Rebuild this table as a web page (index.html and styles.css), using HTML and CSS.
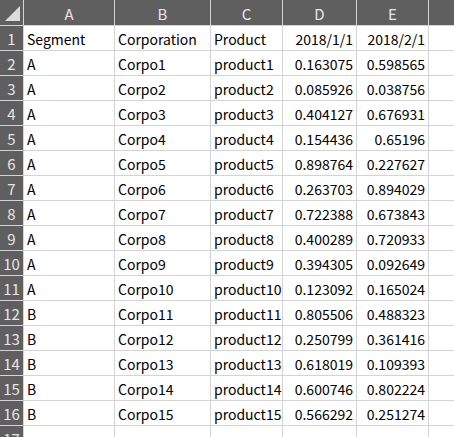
FILE: index.html
```html
<!DOCTYPE html>
<html>
<head>
<meta charset="utf-8">
<link rel="stylesheet" href="styles.css">
</head>
<body>
<div class="sheet">
  <div class="hd corner"><svg width="23" height="25" viewBox="0 0 23 25"><polygon points="5,21 20,21 20,6" fill="#dcdcdc"/></svg></div>
  <div class="hd col">A</div><div class="hd col">B</div><div class="hd col">C</div><div class="hd col">D</div><div class="hd col">E</div><div class="hd col"></div>

  <div class="hd rn">1</div><div class="c">Segment</div><div class="c">Corporation</div><div class="c">Product</div><div class="c n">2018/1/1</div><div class="c n">2018/2/1</div><div class="c"></div>
  <div class="hd rn">2</div><div class="c">A</div><div class="c">Corpo1</div><div class="c">product1</div><div class="c n">0.163075</div><div class="c n">0.598565</div><div class="c"></div>
  <div class="hd rn">3</div><div class="c">A</div><div class="c">Corpo2</div><div class="c">product2</div><div class="c n">0.085926</div><div class="c n">0.038756</div><div class="c"></div>
  <div class="hd rn">4</div><div class="c">A</div><div class="c">Corpo3</div><div class="c">product3</div><div class="c n">0.404127</div><div class="c n">0.676931</div><div class="c"></div>
  <div class="hd rn">5</div><div class="c">A</div><div class="c">Corpo4</div><div class="c">product4</div><div class="c n">0.154436</div><div class="c n">0.65196</div><div class="c"></div>
  <div class="hd rn">6</div><div class="c">A</div><div class="c">Corpo5</div><div class="c">product5</div><div class="c n">0.898764</div><div class="c n">0.227627</div><div class="c"></div>
  <div class="hd rn">7</div><div class="c">A</div><div class="c">Corpo6</div><div class="c">product6</div><div class="c n">0.263703</div><div class="c n">0.894029</div><div class="c"></div>
  <div class="hd rn">8</div><div class="c">A</div><div class="c">Corpo7</div><div class="c">product7</div><div class="c n">0.722388</div><div class="c n">0.673843</div><div class="c"></div>
  <div class="hd rn">9</div><div class="c">A</div><div class="c">Corpo8</div><div class="c">product8</div><div class="c n">0.400289</div><div class="c n">0.720933</div><div class="c"></div>
  <div class="hd rn">10</div><div class="c">A</div><div class="c">Corpo9</div><div class="c">product9</div><div class="c n">0.394305</div><div class="c n">0.092649</div><div class="c"></div>
  <div class="hd rn">11</div><div class="c">A</div><div class="c">Corpo10</div><div class="c">product10</div><div class="c n">0.123092</div><div class="c n">0.165024</div><div class="c"></div>
  <div class="hd rn">12</div><div class="c">B</div><div class="c">Corpo11</div><div class="c">product11</div><div class="c n">0.805506</div><div class="c n">0.488323</div><div class="c"></div>
  <div class="hd rn">13</div><div class="c">B</div><div class="c">Corpo12</div><div class="c">product12</div><div class="c n">0.250799</div><div class="c n">0.361416</div><div class="c"></div>
  <div class="hd rn">14</div><div class="c">B</div><div class="c">Corpo13</div><div class="c">product13</div><div class="c n">0.618019</div><div class="c n">0.109393</div><div class="c"></div>
  <div class="hd rn">15</div><div class="c">B</div><div class="c">Corpo14</div><div class="c">product14</div><div class="c n">0.600746</div><div class="c n">0.802224</div><div class="c"></div>
  <div class="hd rn">16</div><div class="c">B</div><div class="c">Corpo15</div><div class="c">product15</div><div class="c n">0.566292</div><div class="c n">0.251274</div><div class="c"></div>
  <div class="hd rn">17</div><div class="c"></div><div class="c"></div><div class="c"></div><div class="c"></div><div class="c"></div><div class="c"></div>
</div>
</body>
</html>
```
FILE: styles.css
```css
html, body {
  margin: 0;
  padding: 0;
  background: #ffffff;
  overflow: hidden;
  width: 454px;
  height: 437px;
}
.sheet {
  display: grid;
  grid-template-columns: 23px 90px 95px 71px 73px 71px 1fr;
  grid-template-rows: 25px;
  grid-auto-rows: 24px;
  gap: 1px;
  background: #d4d4d4;
  width: 454px;
  font-family: "Noto Sans CJK JP", "Noto Sans", sans-serif;
  font-size: 14px;
  color: #000;
}
.hd {
  background: #5f5f5f;
  color: #e6e6e6;
  display: flex;
  align-items: center;
  justify-content: center;
  line-height: 1;
  font-size: 15px;
}
.corner {
  align-items: stretch;
  justify-content: stretch;
}
.corner svg {
  display: block;
}
.col {
  padding-top: 1px;
}
.c {
  background: #ffffff;
  padding: 1px 3px 0 3px;
  line-height: 24px;
  white-space: nowrap;
  overflow: hidden;
}
.n {
  text-align: right;
}
```
